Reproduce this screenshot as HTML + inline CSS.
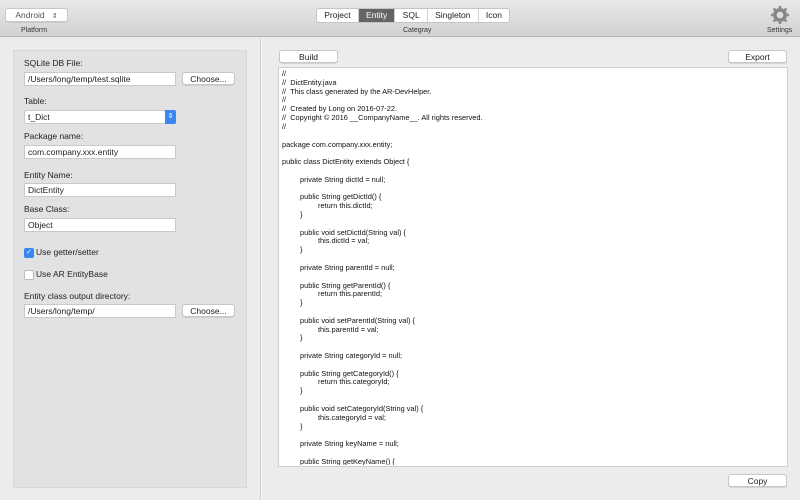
<!DOCTYPE html><html><head><style>
*{margin:0;padding:0;box-sizing:border-box}
body{width:800px;height:500px;overflow:hidden;background:#ececec;font-family:"Liberation Sans",sans-serif;position:relative;color:#222}
.a{position:absolute}
.tb{left:0;top:0;width:800px;height:37px;background:linear-gradient(#e8e8e8,#d2d2d2);border-bottom:1px solid #b5b5b5}
.lbl{font-size:7px;color:#333}
.btn{position:absolute;background:#fff;border:1px solid #c8c8c8;border-radius:3px;font-size:8.5px;text-align:center;line-height:12px;color:#222;box-shadow:0 0.5px 0 #bbb}
.fl{position:absolute;font-size:8.5px;color:#222;left:24px}
.in{position:absolute;left:24px;width:152px;height:14px;background:#fff;border:1px solid #c9c9c9;font-size:8.5px;line-height:12px;padding-left:3px}
.seg{left:316px;top:8px;height:15px;display:flex;border:1px solid #c4c4c4;border-radius:3px;background:#fff;font-size:8.5px;overflow:hidden}
.seg div{padding:0 7.2px;line-height:13px;border-right:1px solid #d0d0d0}
pre{position:absolute;left:282px;top:70px;font-family:"Liberation Sans",sans-serif;font-size:7.4px;line-height:8.82px;color:#111;tab-size:18px}
.cb{position:absolute;width:10px;height:10px;border-radius:2px;left:24px}
</style></head><body>
<div class="a tb"></div>
<div class="btn" style="left:5px;top:8px;width:63px;height:14px;color:#555">Android &nbsp;&nbsp;<span style="font-size:7px">⇕</span></div>
<div class="a lbl" style="left:21px;top:27px">Platform</div>
<div class="a seg"><div>Project</div><div style="background:#646464;color:#fff">Entity</div><div>SQL</div><div>Singleton</div><div style="border:none">Icon</div></div>
<div class="a lbl" style="left:403px;top:27px">Categray</div>
<svg class="a" style="left:770px;top:5px" width="20" height="20" viewBox="0 0 20 20"><g fill="#8a8a8a"><circle cx="10" cy="10" r="7"/><g stroke="#8a8a8a" stroke-width="2.6"><line x1="10" y1="1" x2="10" y2="19"/><line x1="1" y1="10" x2="19" y2="10"/><line x1="3.6" y1="3.6" x2="16.4" y2="16.4"/><line x1="16.4" y1="3.6" x2="3.6" y2="16.4"/></g></g><circle cx="10" cy="10" r="4" fill="#dcdcdc" stroke="#777" stroke-width="1"/></svg>
<div class="a lbl" style="left:767px;top:27px">Settings</div>

<div class="a" style="left:13px;top:50px;width:234px;height:438px;background:#e2e2e2;border:1px solid #d8d8d8"></div>
<div class="fl" style="top:58px">SQLite DB File:</div>
<div class="in" style="top:72px">/Users/long/temp/test.sqlite</div>
<div class="btn" style="left:182px;top:72px;width:53px;height:13px">Choose...</div>
<div class="fl" style="top:96px">Table:</div>
<div class="in" style="top:110px;width:152px;border-radius:2px">t_Dict</div>
<div class="a" style="left:165px;top:110px;width:11px;height:14px;background:#3b87f0;border-radius:0 2px 2px 0;color:#fff;font-size:7px;text-align:center;line-height:14px">⇕</div>
<div class="fl" style="top:131px">Package name:</div>
<div class="in" style="top:145px">com.company.xxx.entity</div>
<div class="fl" style="top:170px">Entity Name:</div>
<div class="in" style="top:183px">DictEntity</div>
<div class="fl" style="top:204px">Base Class:</div>
<div class="in" style="top:218px">Object</div>
<div class="cb" style="top:248px;background:#3b87f0;color:#fff;font-size:7px;text-align:center;line-height:10px">✓</div>
<div class="fl" style="left:36px;top:247px">Use getter/setter</div>
<div class="cb" style="top:270px;background:#fff;border:1px solid #bbb"></div>
<div class="fl" style="left:36px;top:269px">Use AR EntityBase</div>
<div class="fl" style="top:291px">Entity class output directory:</div>
<div class="in" style="top:304px">/Users/long/temp/</div>
<div class="btn" style="left:182px;top:304px;width:53px;height:13px">Choose...</div>

<div class="a" style="left:260px;top:38px;width:1px;height:462px;background:#d0d0d0"></div>
<div class="a" style="left:261px;top:38px;width:1px;height:462px;background:#f6f6f6"></div>

<div class="btn" style="left:279px;top:50px;width:59px;height:13px">Build</div>
<div class="btn" style="left:728px;top:50px;width:59px;height:13px">Export</div>
<div class="a" style="left:278px;top:67px;width:510px;height:400px;background:#fff;border:1px solid #cfcfcf"></div>
<pre>//
//  DictEntity.java
//  This class generated by the AR-DevHelper.
//
//  Created by Long on 2016-07-22.
//  Copyright © 2016 __CompanyName__. All rights reserved.
//

package com.company.xxx.entity;

public class DictEntity extends Object {

	private String dictId = null;

	public String getDictId() {
		return this.dictId;
	}

	public void setDictId(String val) {
		this.dictId = val;
	}

	private String parentId = null;

	public String getParentId() {
		return this.parentId;
	}

	public void setParentId(String val) {
		this.parentId = val;
	}

	private String categoryId = null;

	public String getCategoryId() {
		return this.categoryId;
	}

	public void setCategoryId(String val) {
		this.categoryId = val;
	}

	private String keyName = null;

	public String getKeyName() {</pre>
<div class="a" style="left:279px;top:465px;width:508px;height:1px;background:#fff"></div>
<div class="a" style="left:278px;top:466px;width:510px;height:1px;background:#cfcfcf"></div>
<div class="btn" style="left:728px;top:474px;width:59px;height:13px">Copy</div>
</body></html>
